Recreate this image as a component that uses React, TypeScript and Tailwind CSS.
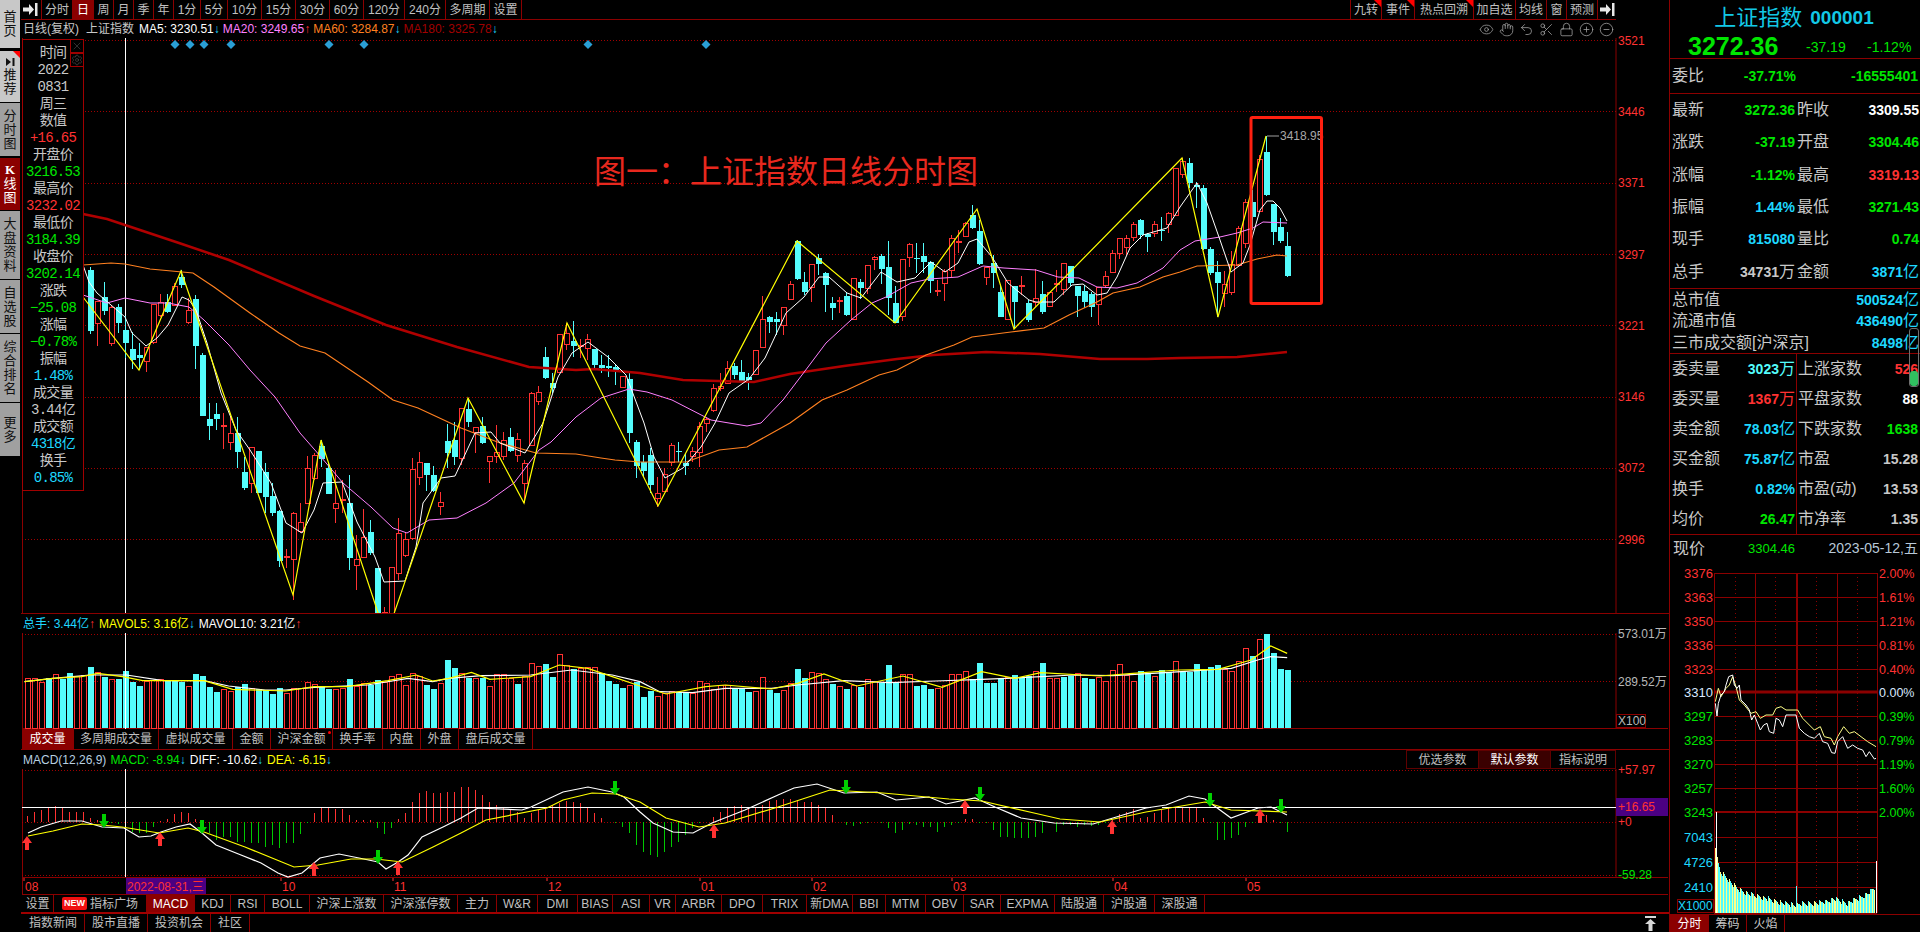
import React from "react";
import { CircleMinus, CirclePlus, Eye, Hand, Lock, Scissors, Settings, Undo2, X } from "lucide-react";

const RED = "#ff3232";
const CYAN = "#54fcfc";
const LINE = "#8b0000";

type Tab = [string, string, boolean?];

const topLeftTabs: Tab[] = [
    ["分时", "w-[31px]"], ["日", "w-[21px]", true], ["周", "w-[20px]"], ["月", "w-[20px]"], ["季", "w-[20px]"], ["年", "w-[20px]"],
    ["1分", "w-[27px]"], ["5分", "w-[27px]"], ["10分", "w-[34px]"], ["15分", "w-[34px]"], ["30分", "w-[34px]"], ["60分", "w-[34px]"],
    ["120分", "w-[41px]"], ["240分", "w-[41px]"], ["多周期", "w-[44px]"], ["设置", "w-[32px]"],
];
const topRightTabs: Tab[] = [
    ["九转", "w-[31px]", false], ["事件", "w-[33px]", false], ["热点回溯", "w-[59px]", false], ["加自选", "w-[42px]"], ["均线", "w-[31px]"], ["窗", "w-[20px]"], ["预测", "w-[31px]"],
];
const volumeTabs: Tab[] = [
    ["成交量", "w-[52px]", true], ["多周期成交量", "w-[85px]"], ["虚拟成交量", "w-[74px]"], ["金额", "w-[38px]"], ["沪深金额", "w-[62px]"],
    ["换手率", "w-[50px]"], ["内盘", "w-[38px]"], ["外盘", "w-[38px]"], ["盘后成交量", "w-[74px]"],
];
const indicatorTabs: Tab[] = [
    ["MACD", "w-[48px]", true], ["KDJ", "w-[36px]"], ["RSI", "w-[34px]"], ["BOLL", "w-[45px]"], ["沪深上涨数", "w-[74px]"], ["沪深涨停数", "w-[74px]"],
    ["主力", "w-[39px]"], ["W&R", "w-[41px]"], ["DMI", "w-[40px]"], ["BIAS", "w-[35px]"], ["ASI", "w-[37px]"], ["VR", "w-[26px]"], ["ARBR", "w-[46px]"],
    ["DPO", "w-[41px]"], ["TRIX", "w-[44px]"], ["新DMA", "w-[46px]"], ["BBI", "w-[33px]"], ["MTM", "w-[40px]"], ["OBV", "w-[38px]"], ["SAR", "w-[37px]"],
    ["EXPMA", "w-[54px]"], ["陆股通", "w-[49px]"], ["沪股通", "w-[51px]"], ["深股通", "w-[50px]"],
];
const newsTabs: Tab[] = [["指数新闻", "w-[63px]"], ["股市直播", "w-[63px]"], ["投资机会", "w-[63px]"], ["社区", "w-[39px]"]];

const railItems = [
    { chars: "首页", cls: "h-[48px] bg-[#c8c8c8]" },
    { chars: "推荐", cls: "h-[51px] bg-[#c8c8c8] mt-[3px]", mark: true },
    { chars: "分时图", cls: "h-[53px] bg-[#a0a0a0] mt-[1px]" },
    { chars: "K线图", cls: "h-[52px] bg-[#8b0000] text-white mt-[2px]" },
    { chars: "大盘资料", cls: "h-[68px] bg-[#a0a0a0] mt-[1px]" },
    { chars: "自选股", cls: "h-[53px] bg-[#a0a0a0] mt-[1px]" },
    { chars: "综合排名", cls: "h-[68px] bg-[#a0a0a0] mt-[1px]" },
    { chars: "更多", cls: "h-[53px] bg-[#a0a0a0] mt-[1px]" },
];

const infoRows: [string, string][] = [
    ["时间", "text-[#c8c8c8]"], ["2022", "text-[#c8c8c8]"], ["0831", "text-[#c8c8c8]"], ["周三", "text-[#c8c8c8]"], ["数值", "text-[#c8c8c8]"],
    ["+16.65", "text-[#ff3232]"], ["开盘价", "text-[#c8c8c8]"], ["3216.53", "text-[#00e600]"], ["最高价", "text-[#c8c8c8]"], ["3232.02", "text-[#ff3232]"],
    ["最低价", "text-[#c8c8c8]"], ["3184.39", "text-[#00e600]"], ["收盘价", "text-[#c8c8c8]"], ["3202.14", "text-[#00e600]"], ["涨跌", "text-[#c8c8c8]"],
    ["−25.08", "text-[#00e600]"], ["涨幅", "text-[#c8c8c8]"], ["−0.78%", "text-[#00e600]"], ["振幅", "text-[#c8c8c8]"], ["1.48%", "text-[#1ed8ff]"],
    ["成交量", "text-[#c8c8c8]"], ["3.44亿", "text-[#c8c8c8]"], ["成交额", "text-[#c8c8c8]"], ["4318亿", "text-[#1ed8ff]"], ["换手", "text-[#c8c8c8]"], ["0.85%", "text-[#1ed8ff]"],
];

// x, up(1)/down(0), body top, body bottom, high, low
const candles: number[][] = [
    [90,0,270,331,267,334],[97,1,301,323,301,346],[104,0,297,311,282,315],[111,1,307,343,305,346],[118,0,307,323,304,333],[125,0,330,343,316,358],
    [132,0,349,360,332,369],[139,0,355,358,343,370],[146,1,347,361,347,372],[153,1,304,342,304,344],[160,1,302,315,294,317],[167,0,302,312,294,313],
    [174,1,286,305,283,306],[181,0,277,285,270,288],[188,1,310,322,298,324],[195,0,299,346,295,369],[202,0,355,416,353,416],[209,0,419,426,403,440],
    [216,0,414,419,403,430],[223,1,425,426,413,449],[230,1,433,442,417,450],[237,0,433,452,417,468],[244,0,472,488,457,490],[251,1,447,483,447,493],
    [258,0,451,493,451,493],[265,0,472,497,463,513],[272,0,496,513,483,516],[279,0,511,561,510,567],[286,1,556,557,549,568],[293,1,513,559,512,600],
    [300,1,522,531,503,533],[307,1,468,503,456,503],[314,1,455,478,453,480],[321,0,446,459,440,467],[328,0,468,494,462,494],[335,1,503,508,470,523],
    [342,1,499,500,480,513],[349,0,503,558,475,570],[356,1,559,565,535,590],[363,1,537,557,509,557],[370,0,532,553,520,555],[377,0,568,620,568,620],
    [384,1,612,620,607,620],[391,1,567,620,567,620],[398,1,533,573,518,580],[405,1,539,555,532,557],[412,1,469,538,458,540],[419,1,462,477,452,485],
    [426,0,463,475,463,491],[433,0,475,491,466,492],[440,1,502,506,492,515],[447,0,441,453,424,468],[454,0,440,457,422,465],[461,1,408,458,408,465],
    [468,0,409,422,398,427],[475,1,427,432,427,453],[482,0,426,443,417,444],[489,1,456,461,456,483],[496,1,452,456,425,463],[503,1,440,456,432,460],
    [510,0,437,451,428,452],[517,1,439,455,433,462],[524,1,463,483,460,503],[531,1,393,445,392,445],[538,1,392,401,386,405],[545,0,357,378,347,379],
    [552,0,383,388,373,393],[559,1,334,372,334,373],[566,1,333,344,323,350],[573,0,341,346,321,357],[580,1,345,346,339,358],[587,1,339,348,334,360],
    [594,0,349,365,349,368],[601,0,365,368,355,373],[608,0,366,368,355,377],[615,0,367,371,364,385],[622,1,376,387,376,388],[629,0,379,433,373,443],
    [636,0,442,466,440,478],[643,0,462,471,455,477],[650,0,455,485,448,493],[657,1,493,498,477,507],[664,1,474,491,468,492],[671,1,445,462,443,466],
    [678,0,451,452,442,462],[685,0,463,466,453,475],[692,1,451,456,447,462],[699,1,426,452,422,467],[706,1,419,423,417,432],[713,1,388,410,384,412],
    [720,1,386,388,373,391],[727,1,368,383,361,384],[734,0,366,375,363,379],[741,0,372,381,360,382],[748,0,377,380,373,390],[755,1,350,374,350,375],
    [762,1,319,347,296,348],[769,0,317,322,316,333],[776,0,319,322,312,335],[783,1,307,325,307,335],[790,1,284,299,281,300],[797,0,241,279,240,280],
    [804,0,282,292,272,295],[811,1,264,287,264,302],[818,0,258,264,254,275],[825,0,273,285,272,312],[832,0,303,308,297,320],[839,1,300,301,297,313],
    [846,0,296,315,292,316],[853,1,278,319,278,319],[860,0,282,288,279,299],[867,1,265,288,265,294],[874,1,257,259,256,270],[881,0,256,269,254,284],
    [888,0,267,298,241,315],[895,0,303,323,286,323],[902,1,259,316,259,321],[909,1,244,257,243,267],[916,0,258,259,243,273],[923,0,256,262,243,273],
    [930,0,262,281,261,293],[937,1,290,291,280,296],[944,1,271,283,269,301],[951,1,238,270,235,277],[958,1,241,242,230,253],[965,1,223,236,222,237],
    [972,0,215,228,205,229],[979,0,231,264,220,265],[986,1,267,277,267,285],[993,0,263,273,255,288],[1000,0,292,317,286,317],[1007,1,280,319,280,319],
    [1014,0,286,302,286,328],[1021,1,285,286,276,295],[1028,0,303,320,300,322],[1035,1,298,302,269,307],[1042,0,294,312,281,314],[1049,1,292,306,292,307],
    [1056,1,283,284,270,292],[1063,1,263,289,263,295],[1070,0,266,283,266,286],[1077,0,286,296,286,317],[1084,0,291,302,285,308],[1091,0,294,307,292,317],
    [1098,1,287,304,287,325],[1105,1,276,285,271,287],[1112,1,253,272,250,272],[1119,1,238,253,238,259],[1126,1,238,247,235,255],[1133,1,224,237,222,241],
    [1140,0,220,235,219,239],[1147,0,234,237,233,252],[1154,1,224,233,221,237],[1161,0,230,231,217,241],[1168,1,213,224,212,233],[1175,1,168,215,168,215],
    [1182,1,161,174,158,178],[1189,0,163,183,158,188],[1196,0,185,187,182,208],[1203,0,188,249,185,250],[1210,0,249,273,247,275],[1217,0,272,283,261,317],
    [1224,1,284,293,271,307],[1231,1,264,292,251,295],[1238,1,228,265,226,266],[1245,1,202,243,199,248],[1252,0,202,217,190,230],[1259,1,159,211,155,211],
    [1266,0,152,195,136,196],[1273,0,204,232,204,245],[1280,0,227,241,218,243],[1287,0,246,276,232,277],
];

const ma5 = "83,265 89,282 97,293 111,305 125,317 132,333 146,346 157,338 168,325 182,297 189,300 196,310 207,343 221,393 236,430 250,450 271,483 286,523 302,533 314,510 323,483 342,482 357,522 375,557 384,582 405,581 416,547 423,503 441,478 455,476 475,433 491,432 500,443 525,453 543,423 558,377 572,353 588,342 608,357 626,375 644,423 654,457 665,478 683,468 701,447 715,423 729,393 749,379 765,358 786,313 804,297 819,277 829,277 847,293 861,298 881,272 897,282 915,278 931,262 945,272 958,263 969,242 977,239 992,257 1008,283 1019,292 1029,300 1036,302 1054,302 1072,285 1083,284 1097,295 1107,293 1117,277 1130,248 1143,235 1167,228 1180,207 1197,183 1207,203 1220,240 1231,272 1243,263 1250,245 1260,210 1267,201 1273,201 1280,208 1287,221";
const ma20 = "83,295 107,303 125,298 150,303 168,303 189,307 204,320 229,345 250,370 275,397 300,433 321,457 343,483 371,507 393,528 407,533 429,520 457,518 486,503 514,483 539,450 551,442 576,417 601,398 629,389 647,392 672,400 711,420 747,426 761,423 783,400 808,367 826,343 851,320 872,303 886,297 911,283 929,279 958,277 983,266 1004,268 1036,270 1058,277 1079,278 1097,287 1117,288 1137,283 1163,268 1180,250 1195,241 1220,237 1237,233 1253,228 1263,222 1287,223";
const ma60 = "83,265 111,263 125,264 150,269 193,273 214,287 250,313 279,333 300,346 325,353 368,382 393,400 418,408 461,428 500,443 536,453 576,454 601,458 615,460 640,462 686,462 719,450 747,447 790,423 822,400 847,390 879,375 897,370 926,355 954,345 972,337 1011,332 1044,328 1069,315 1097,302 1113,293 1140,287 1163,277 1180,272 1197,266 1237,265 1257,259 1277,255 1287,256";
const ma180 = "83,214 107,219 125,225 179,243 229,260 314,296 386,325 457,347 529,367 576,370 594,369 640,373 683,380 754,382 790,374 844,366 897,359 933,355 986,352 1040,354 1100,359 1147,359 1180,358 1237,357 1287,352";
const zigzag = "83,297 139,370 181,271 293,595 321,440 386,637 468,398 524,503 567,323 658,506 797,241 895,323 977,209 1014,329 1182,158 1218,317 1266,136";

const diamonds = [175, 190, 204, 231, 329, 364, 588, 706];
const priceGrid: [number, string][] = [[40.5, "3521"], [111.5, "3446"], [183, "3371"], [254.5, "3297"], [325.5, "3221"], [397, "3146"], [468, "3072"], [539.5, "2996"]];

// volume bar tops as read off the chart, negative = falling day
const volumes = [
    205,205,215,-205,193,-207,-190,198,195,-172, 187,-200,207,-207,-183,-217,-228,212,210,207,
    -210,-214,-215,228,-193,-198,-230,-245,238,243, -232,-222,235,-237,-240,-252,-235,250,235,233,
    215,222,-228,-238,237,233,-207,228,220,-225, -210,215,197,192,225,190,197,-225,-238,220,
    -150,-175,190,-203,205,-203,228,193,193,205, -222,198,160,168,-163,-201,133,165,-178,175,
    172,172,-190,-213,-222,-233,225,-216,
    -260,-243,258,250,243,-245,-245,248,213,220, 237,225,225,-235,-235,-245,243,202,-240,-250,
    240,220,-177,-205,187,188,208,-222,228,-237, 225,-230,208,213,-220,-165,-215,193,193,-228,
    -226,-237,233,225,193,192,183,-208,-158,-220, -220,-208,200,-195,-200,-197,183,-158,205,205,
    -200,-197,190,-205,-207,200,213,180,163,195, 213,-183,-190,198,-180,-185,153,-185,-185,-162,
    -180,-170,-165,178,183,153,115,-138,87,-72, -128,-177,-180,
];
const macdBars = [
    618,605,600,593,588,590,605,605,605,625, 630,633,640,642,650,665,668,670,650,632,
    628,612,605,608,628,640,670,690,680,680, 695,695,700,700,710,705,713,700,700,672,
    640,608,593,595,597,597,615,630,630,630, 655,672,655,628,610,575,548,542,548,550,
    546,545,532,532,540,555,575,585,592,600, 605,625,610,600,590,585,580,573,575,580,
    590,610,625,635,640,650,668,705,
    725,735,740,725,710,695,675,655,640,635, 620,605,590,588,585,590,590,585,573,570,
    567,567,570,575,575,585,593,615,635,645, 648,643,640,635,640,655,670,660,642,645,
    650,652,665,650,645,640,628,627,640,640, 660,682,680,683,685,685,680,670,640,665,
    645,645,650,645,647,645,640,630,612,605, 598,625,620,608,600,595,592,590,592,595,
    625,640,690,690,685,675,650,640,610,615, 630,640,665,
];

const volY = (v: number) => 610 + v / 3;
const z6 = (s: string) => s.split(" ").map((p) => { const [a, b] = p.split(",").map(Number); return `${a / 2.45},${volY(b)}`; }).join(" ");
const z7 = (s: string) => s.split(" ").map((p) => { const [a, b] = p.split(",").map(Number); return `${a / 1.522 + 640},${volY(b)}`; }).join(" ");

const volWhite = z6("60,215 130,205 220,195 310,195 400,212 500,212 560,228 650,240 700,240 770,232 900,225 1000,205 1060,215 1100,205 1180,197 1300,195 1400,180 1500,195 1568,215") + " " + z7("30,245 80,248 130,235 200,235 240,225 310,212 380,218 450,213 520,208 580,203 660,195 720,197 800,188 900,175 940,150 960,140 985,143");
const volYellow = z6("60,215 130,205 200,200 240,190 300,200 350,212 500,212 570,238 700,243 770,230 850,230 950,212 1020,195 1060,213 1100,205 1155,187 1200,208 1300,200 1370,165 1440,175 1500,200 1568,228") + " " + z7("40,252 100,230 130,225 200,237 240,220 280,192 330,228 400,198 460,232 520,185 570,205 610,188 700,198 750,190 820,180 880,178 930,150 960,108 985,130");

const diff = "28,833 41,827 61,821 82,821 102,827 124,828 139,837 151,836 161,832 176,827 190,824 202,833 216,845 241,855 261,863 278,873 288,877 302,873 320,858 339,854 359,858 378,862 386,869 398,862 408,855 422,837 443,827 461,818 478,808 522,810 531,807 563,792 588,787 612,792 624,797 640,812 653,823 673,832 693,833 712,823 745,810 778,795 794,788 817,784 844,793 877,792 896,800 929,797 946,804 975,798 995,807 1021,818 1054,823 1093,824 1113,818 1146,808 1166,805 1189,796 1205,799 1231,818 1258,808 1271,807 1287,815";
const dea = "28,836 53,831 82,824 102,825 122,827 159,833 188,828 204,832 245,847 294,867 318,865 351,859 376,859 402,862 433,847 461,833 486,820 547,808 563,800 592,793 616,794 640,802 666,818 699,827 725,823 778,807 830,790 883,793 949,799 982,801 1034,813 1060,819 1100,822 1146,812 1205,802 1231,810 1287,812";
const upArrows = [[27, 843], [160, 839], [314, 869], [398, 868], [714, 831], [965, 807], [1112, 827], [1260, 816]];
const downArrows = [[104, 821], [202, 827], [378, 857], [615, 788], [846, 787], [980, 794], [1210, 800], [1281, 806]];
const months: [number, string][] = [[24, "08"], [281, "10"], [393, "11"], [547, "12"], [700, "01"], [812, "02"], [952, "03"], [1113, "04"], [1246, "05"]];

const minuteX = (v: number) => v / 3 + 1660;
const minuteY = (v: number) => v / 3 + 560;
const minutePts = (s: string) => s.split(" ").map((p) => { const [a, b] = p.split(",").map(Number); return `${minuteX(a)},${minuteY(b)}`; }).join(" ");
const minuteWhite = minutePts("163,430 168,468 172,430 180,405 190,395 195,375 203,350 215,345 220,375 228,385 235,375 240,420 255,435 265,450 272,480 280,465 290,490 298,510 308,495 318,490 325,515 338,520 345,475 355,480 365,500 375,465 390,465 405,465 415,505 430,520 445,530 460,535 475,520 485,545 500,550 512,578 522,580 530,545 545,530 560,565 575,555 590,565 605,570 615,590 625,575 640,597 645,595");
const minuteYellow = minutePts("163,425 172,385 180,410 195,385 205,375 215,350 225,380 235,420 250,435 270,460 285,455 298,475 315,465 335,465 345,445 360,440 375,450 390,450 410,450 425,475 445,495 460,510 478,500 490,530 510,535 520,555 530,530 548,500 565,520 580,515 600,530 620,545 645,560");

const minuteLeft: [number, string, string][] = [
    [573, "3376", RED], [597, "3363", RED], [621, "3350", RED], [645, "3336", RED], [669, "3323", RED], [692, "3310", "#d8e8ff"],
    [716, "3297", "#00e600"], [740, "3283", "#00e600"], [764, "3270", "#00e600"], [788, "3257", "#00e600"], [812, "3243", "#00e600"],
    [837, "7043", "#1ed8ff"], [862, "4726", "#1ed8ff"], [887, "2410", "#1ed8ff"],
];
const minuteRight: [number, string, string][] = [
    [573, "2.00%", RED], [597, "1.61%", RED], [621, "1.21%", RED], [645, "0.81%", RED], [669, "0.40%", RED], [692, "0.00%", "#d8e8ff"],
    [716, "0.39%", "#00e600"], [740, "0.79%", "#00e600"], [764, "1.19%", "#00e600"], [788, "1.60%", "#00e600"], [812, "2.00%", "#00e600"],
];

// outline of the one-minute volume bars, zoomed x -> zoomed top y
const envelope = [[165, 860], [172, 905], [180, 935], [200, 955], [230, 985], [260, 1000], [300, 1010], [350, 1025], [400, 1035], [500, 1025], [520, 1015], [560, 1030], [600, 1012], [620, 1002], [640, 985]];
const minuteBars = Array.from({ length: 160 }, (_, i) => {
    const zx = 165 + i * 3;
    let top = 985;
    for (let k = 0; k < envelope.length - 1; k++) {
        const [a, b] = envelope[k];
        const [c, d] = envelope[k + 1];
        if (zx >= a && zx <= c) top = b + ((d - b) * (zx - a)) / (c - a);
    }
    const noise = ((i * 37 + 11) % 17) - 8;
    return { x: 1714 + i, top: minuteY(top + noise), yellow: (i * 13 + (i >> 2)) % 5 < 2 };
});

const quoteRows = [
    ["最新", "3272.36", "text-[#00e600]", "昨收", "3309.55", "text-white"],
    ["涨跌", "-37.19", "text-[#00e600]", "开盘", "3304.46", "text-[#00e600]"],
    ["涨幅", "-1.12%", "text-[#00e600]", "最高", "3319.13", "text-[#ff3232]"],
    ["振幅", "1.44%", "text-[#1ed8ff]", "最低", "3271.43", "text-[#00e600]"],
    ["现手", "815080", "text-[#1ed8ff]", "量比", "0.74", "text-[#00e600]"],
    ["总手", "34731万", "text-[#c8c8c8]", "金额", "3871亿", "text-[#1ed8ff]"],
];
const capRows = [["总市值", "500524亿"], ["流通市值", "436490亿"], ["三市成交额[沪深京]", "8498亿"]];
const breadthRows = [
    ["委卖量", "3023万", "text-[#54fcfc]", "上涨家数", "526", "text-[#ff3232]"],
    ["委买量", "1367万", "text-[#ff3232]", "平盘家数", "88", "text-white"],
    ["卖金额", "78.03亿", "text-[#1ed8ff]", "下跌家数", "1638", "text-[#00e600]"],
    ["买金额", "75.87亿", "text-[#1ed8ff]", "市盈", "15.28", "text-[#c8c8c8]"],
    ["换手", "0.82%", "text-[#1ed8ff]", "市盈(动)", "13.53", "text-[#c8c8c8]"],
    ["均价", "26.47", "text-[#00e600]", "市净率", "1.35", "text-[#c8c8c8]"],
];

const Value: React.FC<{ text: string; className: string }> = ({ text, className }) => {
    const unit = /[万亿]$/.test(text) ? text.slice(-1) : "";
    return (
        <span className={`text-[14px] font-bold leading-none whitespace-nowrap ${className}`}>
            {unit ? text.slice(0, -1) : text}
            {unit && <span className="text-[16px] font-normal">{unit}</span>}
        </span>
    );
};

const TabBar: React.FC<{ tabs: Tab[] }> = ({ tabs }) => (
    <>
        {tabs.map(([label, w, state]) => (
            <div
                key={label}
                className={`relative ${w} shrink-0 h-full flex items-center justify-center border-r border-[#8b0000] text-[12px] whitespace-nowrap ${state ? "bg-[#8b0000] text-white" : "text-[#c0c0c0]"}`}
            >
                {label}
                {state === false && <span className="absolute top-0 right-0 w-0 h-0 border-t-[7px] border-l-[7px] border-t-[#ff0000] border-l-transparent" />}
                {label === "沪深金额" && <span className="absolute top-[2px] right-[1px] size-[3px] rounded-full bg-[#ff0000]" />}
            </div>
        ))}
    </>
);

const PinIcon = () => (
    <svg width="15" height="13" viewBox="0 0 15 13" fill="#e8e8e8">
        <path d="M0 4.5h6V1l5 5.500-5 5.500V8.500H0zM12 0h2.500v13H12z" />
    </svg>
);

const Arrow: React.FC<{ x: number; y: number; up?: boolean }> = ({ x, y, up }) => (
    <path
        d={up ? `M${x} ${y - 7}l5 7h-3v7h-4v-7h-3z` : `M${x} ${y + 7}l5 -7h-3v-7h-4v7h-3z`}
        fill={up ? RED : "#00d000"}
    />
);

const PriceChart = () => (
    <svg viewBox="21 38 1648 575" className="block w-[1648px] h-[575px] overflow-visible">
        <defs>
            <clipPath id="price-plot"><rect x="21" y="38" width="1648" height="575" /></clipPath>
        </defs>
        <line x1="22.5" y1="38" x2="22.5" y2="613" stroke={LINE} />
        <line x1="1616" y1="38" x2="1616" y2="613" stroke={LINE} />
        {priceGrid.map(([y, label]) => (
            <g key={label}>
                <line x1="22" y1={y} x2="1616" y2={y} stroke="#a00000" strokeDasharray="1 2" shapeRendering="crispEdges" />
                <text x="1618" y={y + 4} fontSize="12" fill={RED}>{label}</text>
            </g>
        ))}
        <line x1="125.500" y1="38" x2="125.500" y2="613" stroke="#fff" shapeRendering="crispEdges" />
        {diamonds.map((x) => (
            <path key={x} d={`M${x} 40l4.500 4.500-4.500 4.500-4.500-4.500z`} fill="#2a9fd6" />
        ))}
        <g clipPath="url(#price-plot)">
            {candles.map(([x, up, top, bottom, hi, lo]) => (
                <g key={x} shapeRendering="crispEdges">
                    <line x1={x + 0.5} y1={hi} x2={x + 0.5} y2={up ? top : lo} stroke={up ? RED : CYAN} />
                    {up ? <line x1={x + 0.5} y1={bottom} x2={x + 0.5} y2={lo} stroke={RED} /> : null}
                    {up
                        ? <rect x={x - 1.500} y={top + 0.5} width="5" height={Math.max(bottom - top, 1)} fill="#000" stroke={RED} />
                        : <rect x={x - 2} y={top} width="6" height={Math.max(bottom - top, 1)} fill={CYAN} />}
                </g>
            ))}
            <polyline points={ma180} fill="none" stroke="#b00000" strokeWidth="2.500" />
            <polyline points={ma60} fill="none" stroke="#ff8020" strokeWidth="1.200" />
            <polyline points={ma20} fill="none" stroke="#ff80ff" strokeWidth="1" />
            <polyline points={ma5} fill="none" stroke="#fff" strokeWidth="1" />
            <polyline points={zigzag} fill="none" stroke="#ffff00" strokeWidth="1.200" />
        </g>
        <line x1="1267" y1="136" x2="1279" y2="136" stroke="#a0a0a0" />
        <text x="1280" y="140" fontSize="12" fill="#a8a8a8">3418.95</text>
        <rect x="1251" y="117.500" width="70.500" height="186" rx="1.500" fill="none" stroke="#ff2010" strokeWidth="3" />
        <text x="594" y="183" fontSize="32" fill="#e8281e">图一：上证指数日线分时图</text>
    </svg>
);

const VolumeChart = () => (
    <svg viewBox="21 633 1648 96" className="block w-[1648px] h-[96px] overflow-visible">
        <line x1="22.5" y1="633" x2="22.5" y2="729" stroke={LINE} />
        <line x1="1616" y1="633" x2="1616" y2="729" stroke={LINE} />
        <line x1="22" y1="634" x2="1616" y2="634" stroke="#a00000" strokeDasharray="1 2" shapeRendering="crispEdges" />
        <line x1="22" y1="681.500" x2="1616" y2="681.500" stroke="#a00000" strokeDasharray="1 2" shapeRendering="crispEdges" />
        <line x1="22" y1="728.500" x2="1668" y2="728.500" stroke={LINE} />
        {volumes.map((v, i) => {
            const x = 27 + i * 7;
            const top = Math.round(volY(Math.abs(v)));
            return v > 0
                ? <rect key={i} x={x - 1.500} y={top + 0.5} width="5" height={728 - top} fill="none" stroke={RED} shapeRendering="crispEdges" />
                : <rect key={i} x={x - 2} y={top} width="6" height={728 - top} fill={CYAN} shapeRendering="crispEdges" />;
        })}
        <line x1="125.500" y1="633" x2="125.500" y2="729" stroke="#fff" shapeRendering="crispEdges" />
        <polyline points={volWhite} fill="none" stroke="#fff" strokeWidth="1.200" />
        <polyline points={volYellow} fill="none" stroke="#ffff00" strokeWidth="1.200" />
        <text x="1618" y="638" fontSize="12" fill="#b8b8b8">573.01万</text>
        <text x="1618" y="686" fontSize="12" fill="#b8b8b8">289.52万</text>
        <rect x="1616.500" y="714.500" width="29" height="13" fill="none" stroke={LINE} />
        <text x="1618" y="725" fontSize="12" fill="#b8b8b8">X100</text>
    </svg>
);

const MacdChart = () => (
    <svg viewBox="21 769 1648 126" className="block w-[1648px] h-[126px] overflow-visible">
        <line x1="22.5" y1="769" x2="22.5" y2="895" stroke={LINE} />
        <line x1="1616" y1="769" x2="1616" y2="877" stroke={LINE} />
        <line x1="22" y1="770" x2="1616" y2="770" stroke="#a00000" strokeDasharray="1 2" shapeRendering="crispEdges" />
        <line x1="22" y1="822" x2="1616" y2="822" stroke="#a00000" strokeDasharray="1 2" shapeRendering="crispEdges" />
        <line x1="22" y1="875" x2="1616" y2="875" stroke="#a00000" strokeDasharray="1 2" shapeRendering="crispEdges" />
        <line x1="22" y1="877.500" x2="1668" y2="877.500" stroke={LINE} />
        <line x1="22" y1="894.500" x2="1668" y2="894.500" stroke={LINE} />
        {macdBars.map((v, i) => {
            const x = 27.500 + i * 7;
            const y = 610 + v / 3;
            return <line key={i} x1={x} x2={x} y1="822" y2={y} stroke={y < 822 ? RED : "#00c800"} shapeRendering="crispEdges" />;
        })}
        <path d="M22 807.500H529M532 807.500H1151M1162 807.500H1263M1267 807.500H1616" stroke="#fff" fill="none" shapeRendering="crispEdges" />
        <line x1="125.500" y1="769" x2="125.500" y2="877" stroke="#fff" shapeRendering="crispEdges" />
        <polyline points={diff} fill="none" stroke="#fff" strokeWidth="1.200" />
        <polyline points={dea} fill="none" stroke="#ffff00" strokeWidth="1.200" />
        {upArrows.map(([x, y]) => <Arrow key={x} x={x} y={y} up />)}
        {downArrows.map(([x, y]) => <Arrow key={x} x={x} y={y} />)}
        <text x="1618" y="774" fontSize="12" fill={RED}>+57.97</text>
        <rect x="1616" y="798" width="52" height="18" fill="#4b0082" />
        <text x="1618" y="811" fontSize="12" fill={RED}>+16.65</text>
        <text x="1618" y="826" fontSize="12" fill={RED}>+0</text>
        <text x="1618" y="879" fontSize="12" fill="#00e600">-59.28</text>
        {months.map(([x, label]) => (
            <g key={label}>
                <line x1={x} y1="878" x2={x} y2="881" stroke={RED} />
                <text x={x + 1} y="891" fontSize="12" fill={RED}>{label}</text>
            </g>
        ))}
        <rect x="126" y="878" width="80" height="16" fill="#4b0082" />
        <text x="127" y="891" fontSize="12" fill={RED}>2022-08-31,三</text>
    </svg>
);

const MinuteChart = () => (
    <svg viewBox="1669 562 251 352" className="block w-[251px] h-[352px]">
        {[573, 597, 621, 645, 669, 716, 740, 764, 788, 837, 862, 887, 913].map((y) => (
            <line key={y} x1="1713" x2="1876" y1={y + 0.5} y2={y + 0.5} stroke={LINE} />
        ))}
        <line x1="1713" x2="1876" y1="692" y2="692" stroke={LINE} strokeWidth="3" />
        <line x1="1713" x2="1876" y1="812" y2="812" stroke={LINE} strokeWidth="2" />
        {[1713, 1754, 1836, 1876].map((x) => (
            <line key={x} x1={x + 0.5} x2={x + 0.5} y1="573" y2="913" stroke={LINE} />
        ))}
        <line x1="1796" x2="1796" y1="573" y2="913" stroke={LINE} strokeWidth="2" />
        {[1734, 1774, 1815, 1856].map((x) => (
            <line key={x} x1={x + 0.5} x2={x + 0.5} y1="573" y2="913" stroke={LINE} strokeDasharray="1 3" />
        ))}
        {minuteBars.map((b) => (
            <line key={b.x} x1={b.x + 0.5} x2={b.x + 0.5} y1={b.top} y2="913" stroke={b.yellow ? "#ffff88" : CYAN} shapeRendering="crispEdges" />
        ))}
        <line x1="1715.500" x2="1715.500" y1="812" y2="913" stroke="#fff" />
        <line x1="1795.500" x2="1795.500" y1="886" y2="913" stroke={CYAN} />
        <line x1="1875.500" x2="1875.500" y1="861" y2="913" stroke="#fff" />
        <polyline points={minuteYellow} fill="none" stroke="#ffff88" strokeWidth="1" />
        <polyline points={minuteWhite} fill="none" stroke="#fff" strokeWidth="1" />
        {minuteLeft.map(([y, label, color]) => (
            <text key={label} x="1712" y={y + 4.500} fontSize="13" fill={color} textAnchor="end">{label}</text>
        ))}
        {minuteRight.map(([y, label, color]) => (
            <text key={label + y} x="1878" y={y + 4.500} fontSize="12.500" fill={color}>{label}</text>
        ))}
        <rect x="1676.500" y="899.500" width="36" height="13" fill="none" stroke={LINE} />
        <text x="1677" y="910" fontSize="12" fill="#1ed8ff">X1000</text>
    </svg>
);

export default function App() {
    return (
        <div className="flex w-[1920px] h-[932px] overflow-hidden bg-black font-['Liberation_Sans','Noto_Sans_CJK_SC',sans-serif]">
            {/* left rail */}
            <div className="flex flex-col w-[21px] shrink-0 pr-[1px]">
                {railItems.map((item) => (
                    <div key={item.chars} className={`relative flex flex-col items-center justify-center text-[13px] leading-[14px] text-[#111] ${item.cls}`}>
                        {item.mark && (
                            <>
                                <span className="absolute top-0 right-0 w-0 h-0 border-t-[7px] border-l-[7px] border-t-[#ff0000] border-l-transparent" />
                                <svg width="9" height="8" viewBox="0 0 9 8" fill="#111" className="mb-[2px]">
                                    <path d="M0 0l5 4-5 4zM6.500 0H8.500V8H6.500z" />
                                </svg>
                            </>
                        )}
                        {Array.from(item.chars).map((c) => (
                            <span key={c} className={c === "K" ? "font-['Liberation_Serif'] font-bold" : ""}>{c}</span>
                        ))}
                    </div>
                ))}
            </div>

            {/* chart column */}
            <div className="flex flex-col w-[1648px] shrink-0">
                <div className="flex w-[1595px] h-[20px] border-b border-[#8b0000]">
                    <div className="flex w-[21px] pl-[2px] shrink-0 items-center border-r border-[#8b0000]"><PinIcon /></div>
                    <TabBar tabs={topLeftTabs} />
                    <div className="flex-1" />
                    <div className="flex h-full border-l border-[#8b0000]"><TabBar tabs={topRightTabs} /></div>
                    <div className="flex w-[18px] shrink-0 items-center justify-center"><PinIcon /></div>
                </div>

                <div className="flex w-[1595px] h-[18px] items-center pl-[2px] text-[12px] whitespace-nowrap">
                    <span className="text-[#c8c8c8]">日线(复权)</span>
                    <span className="ml-[7px] text-[#c8c8c8]">上证指数</span>
                    <span className="ml-[5px] text-white">MA5: 3230.51<span className="text-[#1ed8ff]">↓</span></span>
                    <span className="ml-[3px] text-[#ff80ff]">MA20: 3249.65<span className="text-[#ff3232]">↑</span></span>
                    <span className="ml-[3px] text-[#ff8020]">MA60: 3284.87<span className="text-[#1ed8ff]">↓</span></span>
                    <span className="ml-[3px] text-[#a00000]">MA180: 3325.78<span className="text-[#1ed8ff]">↓</span></span>
                    <div className="flex ml-auto mr-[2px] gap-[5px] text-[#a8a8a8]">
                        <Eye size={15} strokeWidth={1.2} />
                        <Hand size={15} strokeWidth={1.2} />
                        <Undo2 size={15} strokeWidth={1.2} />
                        <Scissors size={15} strokeWidth={1.2} />
                        <Lock size={15} strokeWidth={1.2} />
                        <CirclePlus size={15} strokeWidth={1.2} />
                        <CircleMinus size={15} strokeWidth={1.2} />
                    </div>
                </div>

                <div className="relative border-b border-[#8b0000]">
                    <PriceChart />
                    <div className="absolute top-[1px] left-[1px] w-[62px] h-[452px] bg-black border border-[#a00000] pt-[4px]">
                        <div className="absolute top-[-1px] right-[-1px] flex w-[14px] h-[14px] items-center justify-center border border-[#a00000] text-[#606060]"><X size={12} strokeWidth={1} /></div>
                        <div className="absolute top-[13px] right-[-1px] flex w-[14px] h-[14px] items-center justify-center border border-[#a00000] text-[#606060]"><Settings size={12} strokeWidth={1} /></div>
                        {infoRows.map(([text, color], i) => (
                            <div key={i} className={`h-[17px] flex items-center justify-center text-[14px] leading-none font-['Liberation_Mono','Noto_Sans_CJK_SC',monospace] tracking-[-0.7px] ${color}`}>
                                {text}
                            </div>
                        ))}
                    </div>
                </div>

                <div className="flex w-[1595px] h-[19px] items-center pl-[2px] text-[12px] whitespace-nowrap">
                    <span className="text-[#1ed8ff]">总手: 3.44亿<span className="text-[#ff3232]">↑</span></span>
                    <span className="ml-[4px] text-[#ffff00]">MAVOL5: 3.16亿<span className="text-[#1ed8ff]">↓</span></span>
                    <span className="ml-[4px] text-white">MAVOL10: 3.21亿<span className="text-[#ff3232]">↑</span></span>
                </div>
                <VolumeChart />
                <div className="flex w-[1648px] h-[21px] pl-[1px] border-b border-[#8b0000]">
                    <TabBar tabs={volumeTabs} />
                </div>

                <div className="flex w-[1595px] h-[19px] items-center pl-[2px] text-[12px] whitespace-nowrap">
                    <span className="text-[#b8d0e0]">MACD(12,26,9)</span>
                    <span className="ml-[4px] text-[#00e600]">MACD: -8.94<span className="text-[#1ed8ff]">↓</span></span>
                    <span className="ml-[4px] text-white">DIFF: -10.62<span className="text-[#1ed8ff]">↓</span></span>
                    <span className="ml-[4px] text-[#ffff00]">DEA: -6.15<span className="text-[#1ed8ff]">↓</span></span>
                    <div className="flex h-full ml-auto border border-[#600000] text-[12px]">
                        <div className="flex w-[72px] items-center justify-center border-r border-[#600000] text-[#c0c0c0]">优选参数</div>
                        <div className="flex w-[72px] items-center justify-center border-r border-[#600000] bg-[#3a0000] text-white">默认参数</div>
                        <div className="flex w-[64px] items-center justify-center text-[#c0c0c0]">指标说明</div>
                    </div>
                </div>
                <MacdChart />

                <div className="flex w-[1648px] h-[17px] pl-[1px]">
                    <div className="flex w-[32px] shrink-0 items-center justify-center border-r border-[#8b0000] text-[12px] text-[#c0c0c0]">设置</div>
                    <div className="flex w-[93px] shrink-0 items-center justify-center gap-[3px] border-r border-[#8b0000] text-[12px] text-[#c0c0c0]">
                        <span className="flex h-[13px] items-center rounded-[2px] bg-[#f01010] px-[2px] text-[9px] font-bold text-white">NEW</span>
                        指标广场
                    </div>
                    <TabBar tabs={indicatorTabs} />
                </div>
                <div className="h-[2px] bg-[#a00000]" />
                <div className="flex h-[18px] w-[1648px] pl-[1px] items-stretch">
                    <TabBar tabs={newsTabs} />
                    <div className="flex ml-auto mr-[13px] items-center">
                        <svg width="11" height="15" viewBox="0 0 11 15" fill="#d8d8d8">
                            <path d="M0 0h11v2H0zM5.500 3L11 8H7.500v7h-4V8H0z" />
                        </svg>
                    </div>
                </div>
            </div>

            {/* quote panel */}
            <div className="relative flex flex-col w-[251px] shrink-0 border-l border-[#8b0000] text-[16px] text-[#c8c8c8]">
                <div className="flex h-[35px] items-center justify-center pr-[2px] gap-[8px] text-[#12c8e6]">
                    <span className="text-[22px] leading-none">上证指数</span>
                    <span className="text-[19px] font-bold leading-none">000001</span>
                </div>
                <div className="flex h-[24px] items-center pl-[18px] border-b border-[#8b0000] text-[#00e600]">
                    <span className="w-[118px] text-[25px] font-bold leading-none">3272.36</span>
                    <span className="w-[61px] text-[14px] leading-none">-37.19</span>
                    <span className="text-[14px] leading-none">-1.12%</span>
                </div>
                <div className="flex h-[35px] items-center px-[2px] border-b border-[#8b0000]">
                    <span className="w-[60px]">委比</span>
                    <span className="w-[64px] text-right text-[14px] font-bold text-[#00e600]">-37.71%</span>
                    <span className="flex-1 text-right text-[14px] font-bold text-[#00e600]">-16555401</span>
                </div>
                <div className="grid h-[195px] grid-rows-6 border-b border-[#8b0000]">
                    {quoteRows.map(([l, v, c, r, w, d]) => (
                        <div key={l} className="flex items-center pl-[2px] pr-[1px]">
                            <span className="w-[32px]">{l}</span>
                            <span className="w-[91px] text-right"><Value text={v} className={c} /></span>
                            <span className="w-[35px] pl-[2px] whitespace-nowrap">{r}</span>
                            <span className="flex-1 text-right"><Value text={w} className={d} /></span>
                        </div>
                    ))}
                </div>
                <div className="flex flex-col h-[65px] justify-center border-b border-[#8b0000]">
                    {capRows.map(([l, v]) => (
                        <div key={l} className="flex h-[21.5px] items-center justify-between pl-[2px] pr-[1px] whitespace-nowrap">
                            <span className="text-[16px] tracking-[0px]">{l}</span>
                            <Value text={v} className="text-[#1ed8ff]" />
                        </div>
                    ))}
                </div>
                <div className="grid h-[181px] grid-rows-6 border-b border-[#8b0000]">
                    {breadthRows.map(([l, v, c, r, w, d]) => (
                        <div key={l} className="flex items-center">
                            <span className="flex h-full w-[127px] items-center justify-between pl-[2px] pr-[1px] border-r border-[#8b0000]">
                                <span>{l}</span>
                                <Value text={v} className={c} />
                            </span>
                            <span className="flex h-full flex-1 items-center justify-between pl-[1px] pr-[2px] whitespace-nowrap">
                                <span>{r}</span>
                                <Value text={w} className={d} />
                            </span>
                        </div>
                    ))}
                </div>
                <div className="flex h-[27px] items-center pl-[3px] pr-[2px]">
                    <span className="w-[75px]">现价</span>
                    <span className="w-[46px] text-[13px] text-[#00e600]">3304.46</span>
                    <span className="ml-auto text-[14px] text-[#b8c8d8]">2023-05-12,五</span>
                </div>
                <MinuteChart />
                <div className="flex h-[18px] items-stretch border-t border-[#8b0000] text-[12px]">
                    <div className="flex w-[39px] items-center justify-center bg-[#8b0000] text-white">分时</div>
                    <div className="flex w-[38px] items-center justify-center border-r border-[#8b0000]">筹码</div>
                    <div className="flex w-[38px] items-center justify-center border-r border-[#8b0000]">火焰</div>
                </div>
                {/* scroll thumb over the breadth table */}
                <div className="absolute top-[328px] left-[239px] flex w-[10px] h-[59px] flex-col justify-end overflow-hidden rounded-[3px] border border-[#707070]">
                    <div className="h-[15px] rounded-[3px] bg-[#30c060]" />
                </div>
            </div>
        </div>
    );
}
